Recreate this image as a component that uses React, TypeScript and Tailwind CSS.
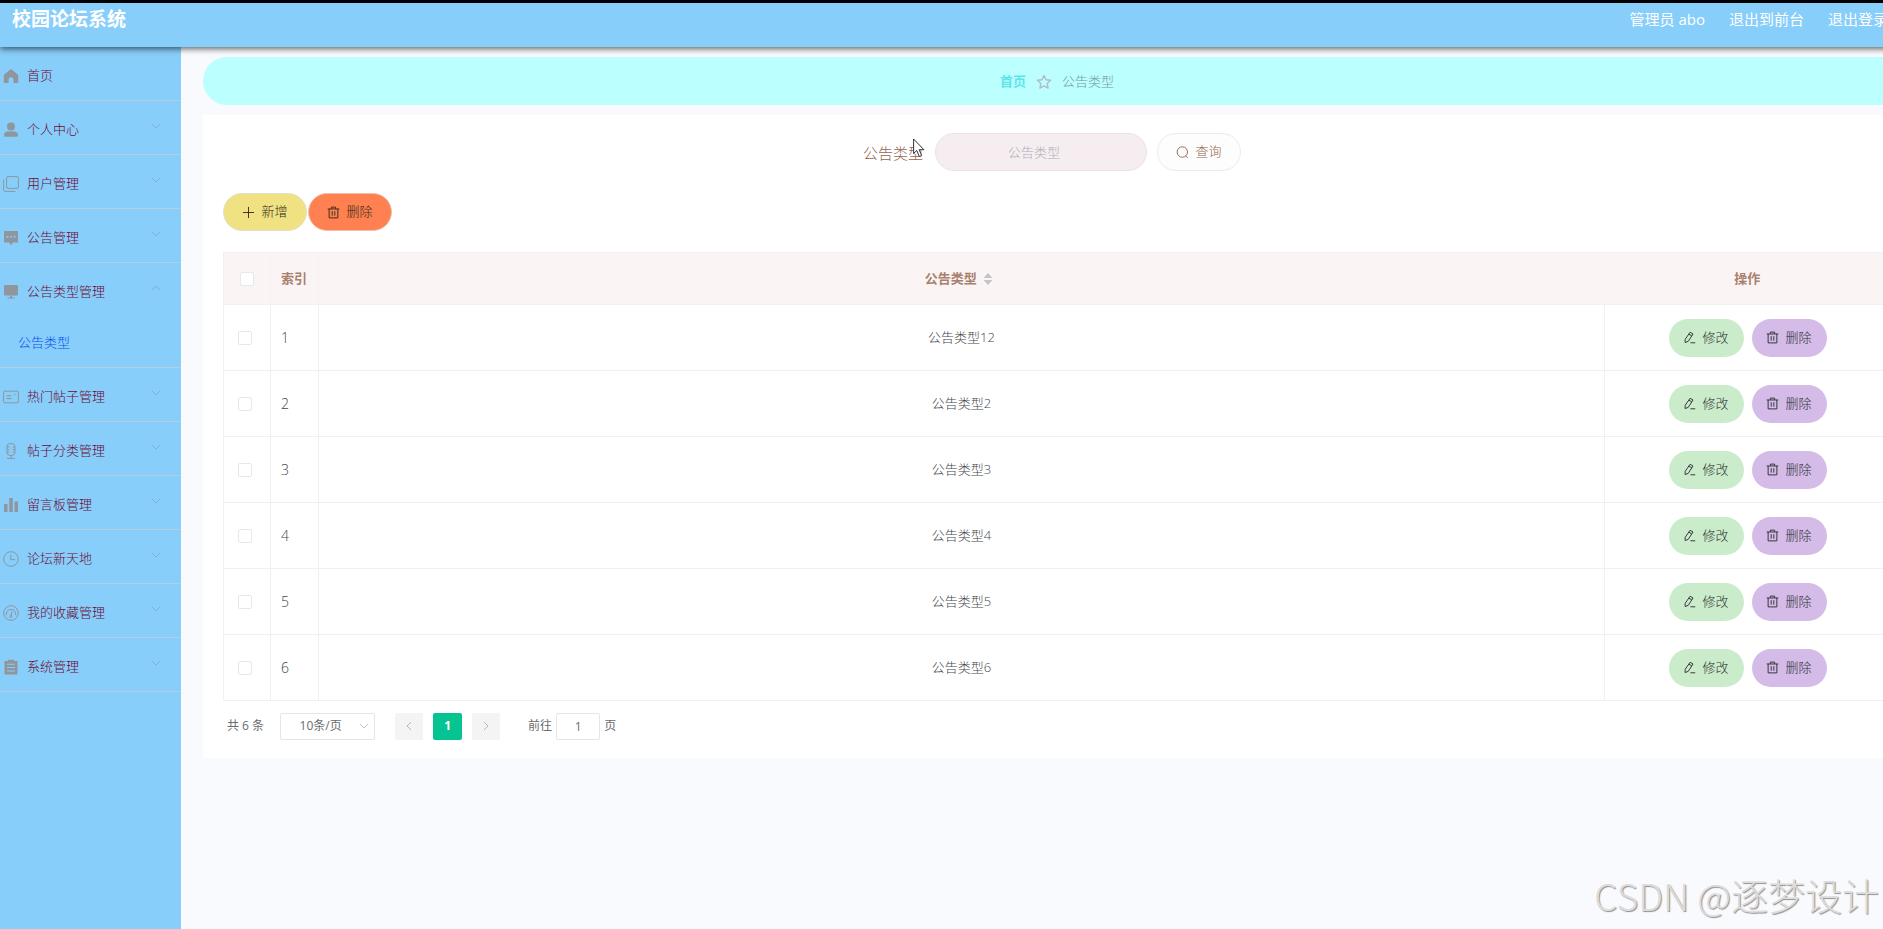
import { ReactNode } from "react";

interface MenuItem {
  label: string;
  icon: ReactNode;
  children?: string[];
  leaf?: boolean;
}

const menu: MenuItem[] = [
  {
    label: "首页",
    leaf: true,
    icon: <path fill="currentColor" d="M8 1 1.2 6.600q-.4.4-.4 1V14q0 1 1 1h3.800v-3.400a2.400 2.400 0 0 1 4.800 0V15h3.800q1 0 1-1V7.600q0-.6-.4-1z" />,
  },
  {
    label: "个人中心",
    icon: (
      <g fill="currentColor">
        <circle cx="8" cy="4.600" r="4" />
        <path d="M1 13.200c0-2.400 1.600-3.700 4-3.700h6c2.400 0 4 1.300 4 3.700q0 1.600-1.600 1.600H2.600Q1 14.800 1 13.200z" />
      </g>
    ),
  },
  {
    label: "用户管理",
    icon: (
      <g fill="none" stroke="currentColor">
        <rect x="3.600" y=".6" width="11.800" height="11.800" rx="1.400" />
        <path d="M.6 3.600v10a1.800 1.800 0 0 0 1.800 1.800h10" />
      </g>
    ),
  },
  {
    label: "公告管理",
    icon: (
      <path
        fill="currentColor"
        fillRule="evenodd"
        d="M1 1h14v11.500H9.800L8 15.500l-1.800-3H1zM3.600 6v1.500h1.800V6zm3.500 0v1.500h1.800V6zm3.500 0v1.500h1.800V6z"
      />
    ),
  },
  {
    label: "公告类型管理",
    children: ["公告类型"],
    icon: (
      <g fill="currentColor">
        <rect x="1" y="1" width="14" height="10.500" rx="1" />
        <path d="M7 11.500h2v2h2.600v1H4.400v-1H7z" />
      </g>
    ),
  },
  {
    label: "热门帖子管理",
    icon: (
      <g fill="none" stroke="currentColor">
        <rect x=".6" y="2.200" width="14.800" height="11.600" rx="1" />
        <path d="M3.500 6.800h5M3.500 9.600h5M11.200 5.500h1.300" />
      </g>
    ),
  },
  {
    label: "帖子分类管理",
    icon: (
      <g fill="none" stroke="currentColor">
        <rect x="4" y=".6" width="8" height="11.800" rx="3" />
        <path d="M4 4h2.500M4 6.500h2.500M4 9h2.500M9.500 4H12M9.500 6.500H12M9.500 9H12M8 12.400v3M4 15.400h8" />
      </g>
    ),
  },
  {
    label: "留言板管理",
    icon: <path fill="currentColor" d="M1 7h3.500v8H1zM6.200 1h3.600v14H6.200zM11.500 4.500H15V15h-3.500z" />,
  },
  {
    label: "论坛新天地",
    icon: (
      <g fill="none" stroke="currentColor">
        <circle cx="8" cy="8" r="7.300" />
        <path d="M7.800 3.800V8.600H12" />
      </g>
    ),
  },
  {
    label: "我的收藏管理",
    icon: (
      <g fill="none" stroke="currentColor">
        <circle cx="8" cy="8" r="7.300" />
        <path d="M3.300 10.200a4.800 4.800 0 1 1 9.400 0M8.800 6.500 8 11" />
        <circle cx="7.900" cy="11.500" r="1" />
      </g>
    ),
  },
  {
    label: "系统管理",
    icon: (
      <path
        fill="currentColor"
        fillRule="evenodd"
        d="M1.500 2H5V.8h6V2h3.500v13.500h-13zM4 4.800v1h8v-1zm0 3.300v1h8v-1zm0 3.300v1h8v-1z"
      />
    ),
  },
];

const rows = ["公告类型12", "公告类型2", "公告类型3", "公告类型4", "公告类型5", "公告类型6"];

const Chevron = ({ d, className }: { d: string; className: string }) => (
  <svg viewBox="0 0 10 10" className={className} fill="none" stroke="currentColor">
    <path d={d} />
  </svg>
);

const DOWN = "M1 3l4 4 4-4";
const UP = "M1 7l4-4 4 4";

const TrashIcon = () => (
  <svg viewBox="0 0 14 14" className="size-[13px]" fill="none" stroke="currentColor">
    <path d="M.8 3.200h12.400M2.300 3.200v9.600h9.400V3.200M4.700 3V1.200h4.600V3M5.600 5.600v4.800M8.400 5.600v4.800" />
  </svg>
);

const EditIcon = () => (
  <svg viewBox="0 0 14 14" className="size-[13px]" fill="none" stroke="currentColor">
    <path d="M7.600 1.400 10.800 3.200 5.600 11.200 2.200 12.400 2.400 8.900zM6.300 3.400l3.200 1.900M8 12.700h5.200" />
  </svg>
);

const Checkbox = ({ label }: { label: string }) => (
  <input
    type="checkbox"
    aria-label={label}
    className="block size-3.5 appearance-none rounded-xs border border-[#e6e8ec] bg-white"
  />
);

const Header = () => (
  <header className="relative z-10 flex h-[47px] items-start justify-between border-t-3 border-black bg-[#87cefa] pt-1 pr-[43px] pl-3 text-white shadow-[0_2px_6px_rgba(0,0,0,0.6)]">
    <h1 className="text-[19px] leading-6 font-bold">校园论坛系统</h1>
    <div className="flex gap-6 text-[15px] leading-6">
      <span>管理员 abo</span>
      <a href="#front">退出到前台</a>
      <a href="#logout">退出登录</a>
    </div>
  </header>
);

const Sidebar = () => (
  <nav className="w-[181px] shrink-0 bg-[#87cefa] text-[13px] text-[#6e0a34]">
    <ul>
      {menu.map((item) => (
        <li key={item.label} className="border-b border-[#b4cfe0]">
          <a href="#menu" className="flex h-[53px] items-center gap-2 pt-1 pl-[3px]">
            <svg viewBox="0 0 16 16" className="size-4 text-[#8f969e]">
              {item.icon}
            </svg>
            <span>{item.label}</span>
            {!item.leaf && (
              <Chevron d={item.children ? UP : DOWN} className="mr-5 mb-2 ml-auto size-2.5 text-[#83afcb]" />
            )}
          </a>
          {item.children?.map((child) => (
            <a key={child} href="#type" className="flex h-[51px] items-center pt-0.5 pl-[18px] text-[#0a50f0]">
              {child}
            </a>
          ))}
        </li>
      ))}
    </ul>
  </nav>
);

const Breadcrumb = () => (
  <div className="flex h-12 items-center justify-center gap-2.5 rounded-3xl bg-[#bbffff] pt-0.5 text-[13px]">
    <a href="#home" className="font-bold text-[#5fe3ea]">
      首页
    </a>
    <svg viewBox="0 0 16 16" className="size-4" fill="none" stroke="#b3b9c9" strokeWidth="1.400" strokeLinejoin="round">
      <path d="M8 1.500l2 4.200 4.600.6-3.400 3.200.9 4.600L8 11.900l-4.100 2.200.9-4.600L1.400 6.300 6 5.700z" />
    </svg>
    <span className="text-[#7399a4]">公告类型</span>
  </div>
);

const SearchForm = () => (
  <form className="flex h-[38px] items-center justify-center pr-2.5 text-[13px] text-[#94654f]">
    <label htmlFor="type" className="relative mr-3 pt-0.5 text-[15px]">
      公告类型
      <svg viewBox="0 0 12 20" className="absolute -top-0.5 -right-0.5 h-5 w-3" fill="#fff" stroke="#333">
        <path d="M.6 1v14.500l3.200-3 2.500 6 2.400-1-2.500-5.800h4.700z" />
      </svg>
    </label>
    <input
      id="type"
      placeholder="公告类型"
      className="mr-2.5 h-[38px] w-[212px] rounded-full border border-[#e9e3e7] bg-[#f5edf0] pr-3.5 text-center placeholder:text-[#b3aeb6]"
    />
    <button
      type="button"
      className="flex h-[38px] w-[84px] items-center justify-center gap-1.5 rounded-full border border-[#ebebef] bg-[#fdfdfd]"
    >
      <svg viewBox="0 0 14 14" className="size-[13px]" fill="none" stroke="currentColor">
        <circle cx="6.800" cy="6.500" r="5.600" />
        <path d="M10.400 10.600l2.300 2.400" />
      </svg>
      查询
    </button>
  </form>
);

const DataTable = () => (
  <table className="mt-[21px] w-full table-fixed border-collapse border border-[#f0f0f4] text-[13px] text-[#45474b]">
    <colgroup>
      <col className="w-[47px]" />
      <col className="w-12" />
      <col />
      <col className="w-[286px]" />
    </colgroup>
    <thead className="bg-[#faf5f4] text-[#a9806f]">
      <tr className="h-[52px] border-b border-[#f4f0f1]">
        <th className="pl-4">
          <Checkbox label="全选" />
        </th>
        <th className="border-x border-[#f6f1f1] pl-2.5 text-left">索引</th>
        <th>
          <button type="button" className="inline-flex items-center gap-1.5 pr-1.5 font-bold">
            公告类型
            <svg viewBox="0 0 10 12" className="h-3 w-2.5" fill="#c4c4c8">
              <path d="M5 0l4.500 5h-9zM5 12l4.500-5h-9z" />
            </svg>
          </button>
        </th>
        <th>操作</th>
      </tr>
    </thead>
    <tbody>
      {rows.map((name, i) => (
        <tr key={name} className="h-[66px] border-b border-[#f0f0f4]">
          <td className="border-r border-[#f0f0f4] pl-3.5">
            <Checkbox label={name} />
          </td>
          <td className="border-r border-[#f0f0f4] pl-2.5 text-sm">{i + 1}</td>
          <td className="border-r border-[#f0f0f4] text-center">{name}</td>
          <td>
            <div className="flex justify-center gap-2 text-[#2c2f33]">
              <button
                type="button"
                className="flex h-[38px] w-[75px] items-center justify-center gap-1.5 rounded-full bg-[#cbeccb]"
              >
                <EditIcon />
                修改
              </button>
              <button
                type="button"
                className="flex h-[38px] w-[75px] items-center justify-center gap-1.5 rounded-full bg-[#d4bbe8]"
              >
                <TrashIcon />
                删除
              </button>
            </div>
          </td>
        </tr>
      ))}
    </tbody>
  </table>
);

const Pagination = () => (
  <div className="mt-[11px] flex h-7 items-center pl-1 text-xs font-normal text-[#6a6c70]">
    <span className="mr-4">共 6 条</span>
    <div className="relative mr-5">
      <select
        aria-label="每页条数"
        className="block h-[27px] w-[95px] appearance-none rounded-xs border border-[#e3e5ea] bg-white pr-3.5 text-center"
      >
        <option>10条/页</option>
      </select>
      <Chevron d={DOWN} className="pointer-events-none absolute top-2 right-1.5 size-2.5 text-[#c0c4cc]" />
    </div>
    <button
      type="button"
      aria-label="上一页"
      className="mr-2.5 flex h-[27px] w-[28px] items-center justify-center rounded-xs bg-[#f4f4f5]"
    >
      <Chevron d="M7 1L3 5l4 4" className="size-2.5 text-[#b4b7bf]" />
    </button>
    <button type="button" className="mr-2.5 h-[27px] w-[29px] rounded-xs bg-[#05c492] font-bold text-white">
      1
    </button>
    <button
      type="button"
      aria-label="下一页"
      className="mr-7 flex h-[27px] w-[28px] items-center justify-center rounded-xs bg-[#f4f4f5]"
    >
      <Chevron d="M3 1l4 4-4 4" className="size-2.5 text-[#b4b7bf]" />
    </button>
    <label htmlFor="page">前往</label>
    <input
      id="page"
      defaultValue="1"
      className="mx-1 h-[27px] w-11 rounded-xs border border-[#e3e5ea] text-center"
    />
    <span>页</span>
  </div>
);

export default function App() {
  return (
    <div className="relative min-h-screen overflow-hidden bg-[#f9fafd] font-['Open_Sans','Noto_Sans_CJK_SC',sans-serif]">
      {/* the page is a little wider than the window and runs off its right edge */}
      <div className="flex min-h-screen w-[calc(100%+48px)] flex-col">
        <Header />
        <div className="flex grow font-light">
          <Sidebar />
          <main className="min-w-0 grow pt-2.5 pr-5 pl-[22px]">
            <Breadcrumb />
            <section className="mt-2.5 bg-white px-5 py-[18px]">
              <SearchForm />
              <div className="mt-[22px] flex gap-px text-[13px] text-[#332c18]">
                <button
                  type="button"
                  className="flex h-[38px] w-[84px] items-center justify-center gap-1.5 rounded-full border border-[#e3e0c8] bg-[#f0e283]"
                >
                  <svg viewBox="0 0 14 14" className="size-[13px]" fill="none" stroke="currentColor">
                    <path d="M7 1v12M1 7h12" />
                  </svg>
                  新增
                </button>
                <button
                  type="button"
                  className="flex h-[38px] w-[84px] items-center justify-center gap-1.5 rounded-full border border-[#f0c0ac] bg-[#ff8050]"
                >
                  <TrashIcon />
                  删除
                </button>
              </div>
              <DataTable />
              <Pagination />
            </section>
          </main>
        </div>
      </div>
      <div className="absolute right-1 bottom-3.5 font-['Noto_Sans_CJK_SC',sans-serif] text-[37px] leading-10 font-light text-[#dcdcdc] [text-shadow:1px_1px_1px_#909090]">
        CSDN @逐梦设计
      </div>
    </div>
  );
}
